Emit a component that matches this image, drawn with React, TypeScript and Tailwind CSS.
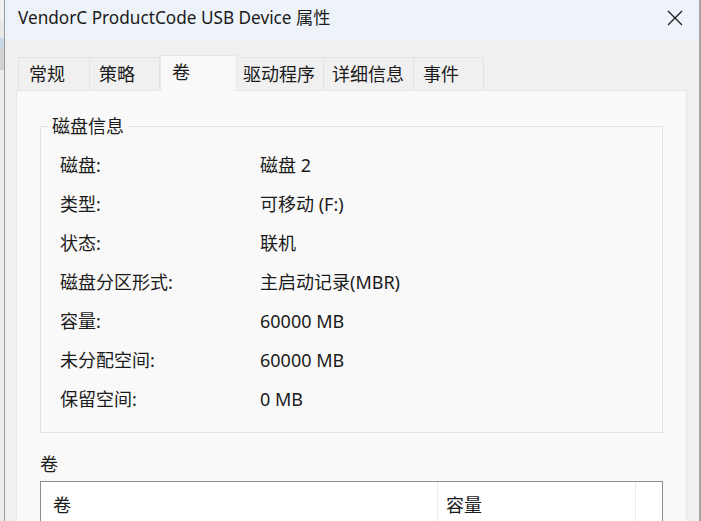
import React from "react";

const font = { fontFamily: '"Noto Sans", "Noto Sans CJK SC", sans-serif' };

const rows: [string, string][] = [
  ["磁盘:", "磁盘 2"],
  ["类型:", "可移动 (F:)"],
  ["状态:", "联机"],
  ["磁盘分区形式:", "主启动记录(MBR)"],
  ["容量:", "60000 MB"],
  ["未分配空间:", "60000 MB"],
  ["保留空间:", "0 MB"],
];

const tabs = [
  { label: "常规", w: 72, pl: 10 },
  { label: "策略", w: 70, pl: 9 },
  { label: "卷", w: 77, pl: 11, active: true },
  { label: "驱动程序", w: 87, pl: 6 },
  { label: "详细信息", w: 90, pl: 8 },
  { label: "事件", w: 70, pl: 9 },
];

export default function App() {
  return (
    <div
      className="w-[701px] h-[521px] overflow-hidden flex bg-[#dedede] text-[#1b1b1b]"
      style={font}
    >
      {/* left background strip */}
      <div className="w-[5px] flex flex-col shrink-0 bg-[#e4e4e4] border-r border-[#9a9a9a]">
        <div className="h-[20px] bg-[#f2f2f2]" />
        <div className="h-[18px] bg-[#e9e9e9]" />
        <div className="h-[10px] bg-[#c9d6e6]" />
        <div className="h-[22px] bg-[#d2d2d2]" />
        <div className="flex-1 bg-[#ececec]" />
      </div>

      {/* window */}
      <div className="w-[694px] shrink-0 flex flex-col bg-[#f0f0f0]">
        {/* title bar */}
        <div className="h-[40px] shrink-0 bg-[#eef3f9] flex items-center justify-between pl-[13px] pr-[16px]">
          <span className="text-[17.2px] leading-none pb-[4px]">VendorC ProductCode USB Device 属性</span>
          <svg width="16" height="16" viewBox="0 0 16 16" className="mb-[4px]">
            <path d="M1 1 L15 15 M15 1 L1 15" stroke="#1b1b1b" strokeWidth="1.3" fill="none" />
          </svg>
        </div>

        {/* tabs */}
        <div className="flex items-end h-[35px] mt-[15px] pl-[13px] shrink-0">
          {tabs.map((t) =>
            t.active ? (
              <div
                key={t.label}
                className="h-[36px] -mb-px relative z-10 bg-[#f9f9f9] border-t border-x border-[#e6e6e6] flex items-start pt-[3px] text-[18px]"
                style={{ width: t.w, paddingLeft: t.pl }}
              >
                {t.label}
              </div>
            ) : (
              <div
                key={t.label}
                className="h-[33px] bg-[#f0f0f0] border-t border-r border-[#e3e3e3] first:border-l flex items-center text-[18px]"
                style={{ width: t.w, paddingLeft: t.pl }}
              >
                {t.label}
              </div>
            )
          )}
        </div>

        {/* panel */}
        <div className="ml-[11px] w-[671px] flex-1 bg-[#f9f9f9] border border-[#e5e5e5] border-b-0 pt-[35px] px-[23px] flex flex-col">
          {/* group box */}
          <div className="relative border border-[#e3e3e3] pt-[19px] pb-[13px] pl-[19px]">
            <span className="absolute left-[7px] top-[-13px] px-[4px] bg-[#f9f9f9] text-[18px] leading-[24px]">
              磁盘信息
            </span>
            {rows.map(([k, v]) => (
              <div key={k} className="h-[39px] flex items-center text-[18px]">
                <span className="w-[200px]">{k}</span>
                <span>{v}</span>
              </div>
            ))}
          </div>

          <div className="mt-[16px] h-[30px] flex items-center text-[18px]">卷</div>

          {/* table */}
          <div className="mt-[2px] border border-[#8d8d8d] bg-white flex h-[60px]">
            <div className="w-[397px] border-r border-[#ececec] pl-[12px] pt-[10px] text-[18px]">卷</div>
            <div className="w-[198px] border-r border-[#ececec] pl-[8px] pt-[10px] text-[18px]">容量</div>
            <div className="flex-1" />
          </div>
        </div>
      </div>

      {/* right background strip */}
      <div className="flex-1 bg-[#a3a3a3]" />
    </div>
  );
}
